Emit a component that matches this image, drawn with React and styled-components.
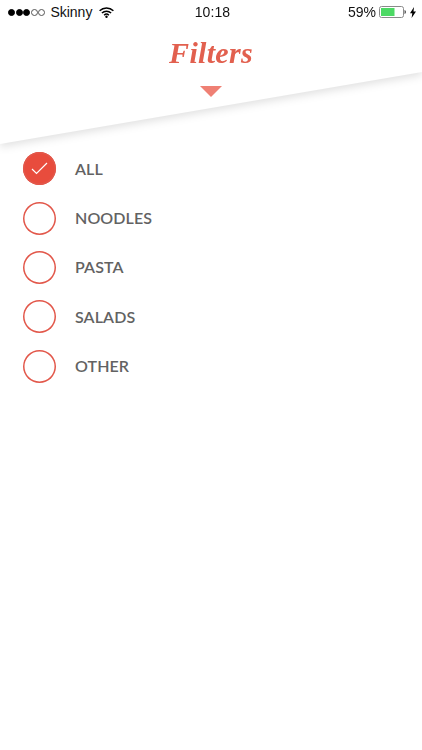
import React from "react";
import styled, { createGlobalStyle } from "styled-components";

const GlobalStyle = createGlobalStyle`
  html, body {
    margin: 0;
    padding: 0;
    background: #fff;
  }
`;

const Screen = styled.div`
  width: 422px;
  height: 750px;
  overflow: hidden;
  background: #fff;
  font-family: "Lato", "Liberation Sans", sans-serif;
`;

const HeaderShadow = styled.div`
  height: 144px;
  filter: drop-shadow(0 3px 4px rgba(0, 0, 0, 0.12));
`;

const Header = styled.header`
  height: 144px;
  background: #fff;
  clip-path: polygon(0 0, 100% 0, 100% 72px, 0 144px);
`;

const StatusBar = styled.div`
  height: 24px;
  padding: 0 6px 0 8px;
  display: grid;
  grid-template-columns: 1fr auto 1fr;
  align-items: center;
  font-family: "Liberation Sans", sans-serif;
  font-size: 14px;
  color: #111;
`;

const StatusLeft = styled.div`
  display: flex;
  align-items: center;
`;

const StatusRight = styled.div`
  display: flex;
  align-items: center;
  justify-content: flex-end;
`;

const Dots = styled.div`
  display: flex;
  gap: 0.6px;
  margin-right: 5px;
`;

const Dot = styled.span`
  width: 7px;
  height: 7px;
  box-sizing: border-box;
  border-radius: 50%;
  border: 1px solid ${(p) => (p.$on ? "#000" : "#555")};
  background: ${(p) => (p.$on ? "#000" : "transparent")};
`;

const Carrier = styled.span`
  margin-right: 7px;
`;

const Clock = styled.span`
  margin-left: 1px;
  font-weight: 500;
  letter-spacing: 0.1px;
`;

const Percent = styled.span`
  margin-right: 3px;
`;

const Title = styled.h1`
  margin: 12px 0 0;
  text-align: center;
  font-family: "Liberation Serif", serif;
  font-style: italic;
  font-weight: 700;
  font-size: 30px;
  line-height: 34px;
  letter-spacing: 0.3px;
  color: #e2604f;
`;

const Pointer = styled.div`
  width: 0;
  height: 0;
  margin: 16px auto 0;
  border-left: 11px solid transparent;
  border-right: 11px solid transparent;
  border-top: 11px solid #ef8074;
`;

const FilterList = styled.ul`
  list-style: none;
  margin: 0;
  padding: 0 0 0 23px;
`;

const FilterRow = styled.li`
  height: 49.4px;
  display: flex;
  align-items: center;
  gap: 19px;
`;

const Circle = styled.span`
  width: 33px;
  height: 33px;
  border-radius: 50%;
  box-shadow: inset 0 0 0 1.5px #e2574a;
  background: ${(p) => (p.$checked ? "#e84c3d" : "transparent")};
  display: flex;
  align-items: center;
  justify-content: center;
`;

const Label = styled.span`
  padding-bottom: 1px;
  font-size: 16px;
  font-weight: 600;
  letter-spacing: 0.1px;
  color: #626262;
`;

const WifiIcon = () => (
  <svg width="15" height="11" viewBox="0 0 15 11">
    <path d="M.6 3.7a10 10 0 0 1 13.8 0" fill="none" stroke="#000" strokeWidth="1.5" />
    <path d="M2.9 6a6.7 6.7 0 0 1 9.2 0" fill="none" stroke="#000" strokeWidth="1.5" />
    <path d="M5.1 8.2a3.4 3.4 0 0 1 4.8 0" fill="none" stroke="#000" strokeWidth="1.5" />
    <circle cx="7.5" cy="9.8" r="1.2" fill="#000" />
  </svg>
);

const BatteryIcon = () => (
  <svg width="27" height="12" viewBox="0 0 27 12">
    <rect x="0.5" y="0.5" width="24" height="11" rx="2" fill="#fff" stroke="#8a8a8a" />
    <rect x="2" y="2" width="13.5" height="8" fill="#4cd964" />
    <path d="M25.5 4v4c.9-.2 1.5-1 1.5-2s-.6-1.8-1.5-2z" fill="#555" />
  </svg>
);

const BoltIcon = () => (
  <svg width="6" height="11" viewBox="0 0 6 11" style={{ marginLeft: 4 }}>
    <path d="M4 0 0 6.2h2.3L1.6 11 6 4.4H3.5z" fill="#000" />
  </svg>
);

const CheckIcon = () => (
  <svg width="17" height="13" viewBox="0 0 17 13">
    <path d="M1 7l4.5 4.5L16 1" fill="none" stroke="#fff" strokeWidth="1.2" />
  </svg>
);

const filters = [
  { name: "ALL", checked: true },
  { name: "NOODLES" },
  { name: "PASTA" },
  { name: "SALADS" },
  { name: "OTHER" },
];

const App = () => {
  return (
    <Screen>
      <GlobalStyle />
      <HeaderShadow>
        <Header>
          <StatusBar>
            <StatusLeft>
              <Dots>
                <Dot $on />
                <Dot $on />
                <Dot $on />
                <Dot />
                <Dot />
              </Dots>
              <Carrier>Skinny</Carrier>
              <WifiIcon />
            </StatusLeft>
            <Clock>10:18</Clock>
            <StatusRight>
              <Percent>59%</Percent>
              <BatteryIcon />
              <BoltIcon />
            </StatusRight>
          </StatusBar>
          <Title>Filters</Title>
          <Pointer />
        </Header>
      </HeaderShadow>
      <FilterList>
        {filters.map((filter) => (
          <FilterRow key={filter.name}>
            <Circle $checked={filter.checked}>{filter.checked && <CheckIcon />}</Circle>
            <Label>{filter.name}</Label>
          </FilterRow>
        ))}
      </FilterList>
    </Screen>
  );
};

export default App;
